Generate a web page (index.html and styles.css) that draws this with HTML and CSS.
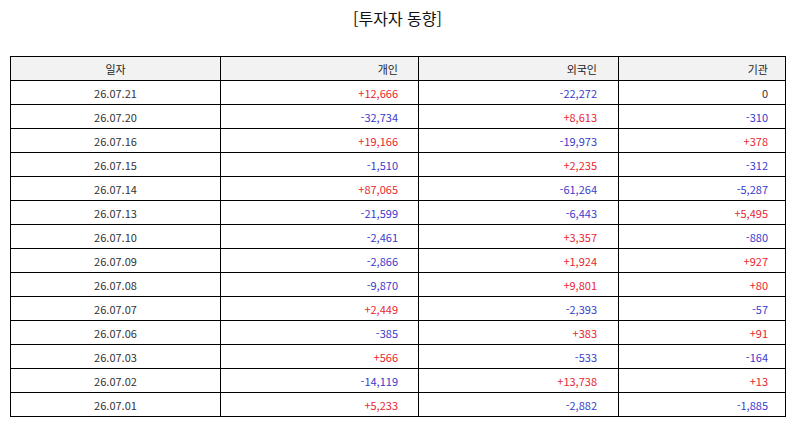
FILE: index.html
```html
<!DOCTYPE html>
<html lang="ko">
<head>
<meta charset="utf-8">
<title>투자자 동향</title>
<link rel="stylesheet" href="styles.css">
</head>
<body>
<h1 class="title">[투자자 동향]</h1>
<table class="grid">
  <colgroup>
    <col class="c-date">
    <col class="c-ind">
    <col class="c-for">
    <col class="c-inst">
  </colgroup>
  <thead>
    <tr><th class="center">일자</th><th class="num p-ind">개인</th><th class="num p-for">외국인</th><th class="num p-inst">기관</th></tr>
  </thead>
  <tbody>
    <tr><td class="center">26.07.21</td><td class="num p-ind up">+12,666</td><td class="num p-for down">-22,272</td><td class="num p-inst">0</td></tr>
    <tr><td class="center">26.07.20</td><td class="num p-ind down">-32,734</td><td class="num p-for up">+8,613</td><td class="num p-inst down">-310</td></tr>
    <tr><td class="center">26.07.16</td><td class="num p-ind up">+19,166</td><td class="num p-for down">-19,973</td><td class="num p-inst up">+378</td></tr>
    <tr><td class="center">26.07.15</td><td class="num p-ind down">-1,510</td><td class="num p-for up">+2,235</td><td class="num p-inst down">-312</td></tr>
    <tr><td class="center">26.07.14</td><td class="num p-ind up">+87,065</td><td class="num p-for down">-61,264</td><td class="num p-inst down">-5,287</td></tr>
    <tr><td class="center">26.07.13</td><td class="num p-ind down">-21,599</td><td class="num p-for down">-6,443</td><td class="num p-inst up">+5,495</td></tr>
    <tr><td class="center">26.07.10</td><td class="num p-ind down">-2,461</td><td class="num p-for up">+3,357</td><td class="num p-inst down">-880</td></tr>
    <tr><td class="center">26.07.09</td><td class="num p-ind down">-2,866</td><td class="num p-for up">+1,924</td><td class="num p-inst up">+927</td></tr>
    <tr><td class="center">26.07.08</td><td class="num p-ind down">-9,870</td><td class="num p-for up">+9,801</td><td class="num p-inst up">+80</td></tr>
    <tr><td class="center">26.07.07</td><td class="num p-ind up">+2,449</td><td class="num p-for down">-2,393</td><td class="num p-inst down">-57</td></tr>
    <tr><td class="center">26.07.06</td><td class="num p-ind down">-385</td><td class="num p-for up">+383</td><td class="num p-inst up">+91</td></tr>
    <tr><td class="center">26.07.03</td><td class="num p-ind up">+566</td><td class="num p-for down">-533</td><td class="num p-inst down">-164</td></tr>
    <tr><td class="center">26.07.02</td><td class="num p-ind down">-14,119</td><td class="num p-for up">+13,738</td><td class="num p-inst up">+13</td></tr>
    <tr><td class="center">26.07.01</td><td class="num p-ind up">+5,233</td><td class="num p-for down">-2,882</td><td class="num p-inst down">-1,885</td></tr>
  </tbody>
</table>
</body>
</html>
```
FILE: styles.css
```css
html, body {
  margin: 0;
  padding: 0;
  background: #ffffff;
}
body {
  font-family: "Noto Sans CJK KR", "Noto Sans", sans-serif;
  color: #222222;
  padding: 0 9px 0 10px;
}
.title {
  margin: 0;
  padding-top: 6px;
  height: 56px;
  box-sizing: border-box;
  text-align: center;
  font-size: 16px;
  font-weight: normal;
  line-height: 24px;
  color: #111111;
}
.grid {
  width: 775px;
  border-collapse: collapse;
  table-layout: fixed;
  font-size: 11px;
}
.c-date { width: 210px; }
.c-ind { width: 198px; }
.c-for { width: 200px; }
.c-inst { width: 167px; }
.grid th, .grid td {
  border: 1px solid #000000;
  height: 24px;
  padding: 0;
  line-height: 14px;
  font-weight: normal;
  box-sizing: border-box;
  color: #333333;
  vertical-align: middle;
}
.grid th {
  background: #f2f2f2;
  color: #222222;
}
.center { text-align: center; }
.num { text-align: right; }
.p-ind { padding-right: 20px !important; }
.p-for { padding-right: 21px !important; }
.p-inst { padding-right: 17px !important; }
.grid td.up { color: #e8262e; }
.grid td.down { color: #3a3acc; }
```
